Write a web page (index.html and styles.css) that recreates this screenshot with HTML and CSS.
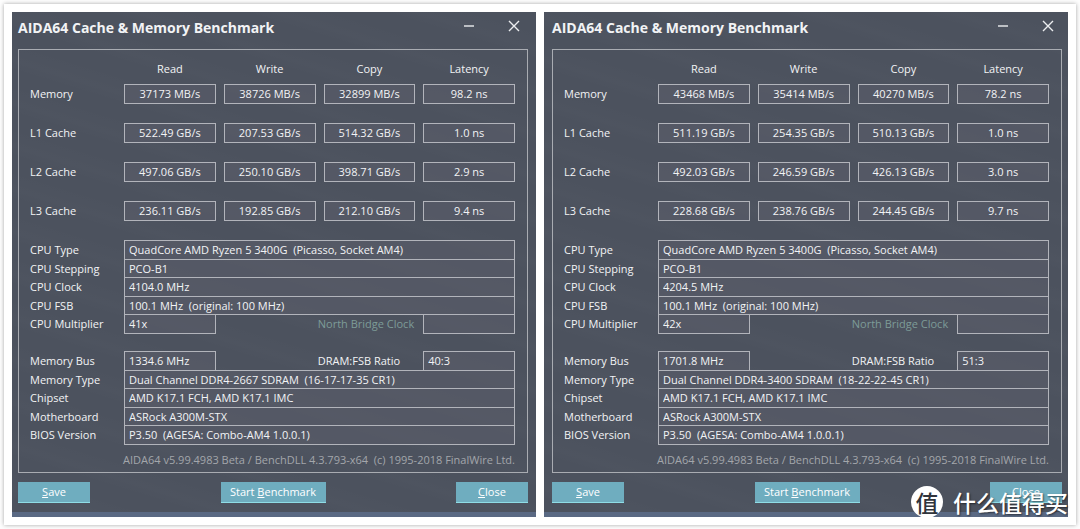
FILE: index.html
```
<!DOCTYPE html>
<html lang="en">
<head>
<meta charset="utf-8">
<title>AIDA64 Cache &amp; Memory Benchmark</title>
<link rel="stylesheet" href="styles.css">
</head>
<body>
<main class="sheet">
  <section class="window">
    <header class="titlebar">
      <h1 class="title">AIDA64 Cache &amp; Memory Benchmark</h1>
      <button class="winbtn" type="button" aria-label="Minimize"><svg width="12" height="12" viewBox="0 0 12 12"><path d="M1 6H11"/></svg></button>
      <button class="winbtn" type="button" aria-label="Close window"><svg width="12" height="12" viewBox="0 0 12 12"><path d="M1 1L11 11M11 1L1 11"/></svg></button>
    </header>
    <div class="panel">
      <table class="bench">
        <thead><tr><td class="name"></td><th>Read</th><th>Write</th><th>Copy</th><th>Latency</th></tr></thead>
        <tbody>
          <tr><th class="name">Memory</th><td><div class="box">37173 MB/s</div></td><td><div class="box">38726 MB/s</div></td><td><div class="box">32899 MB/s</div></td><td><div class="box">98.2 ns</div></td></tr>
          <tr><th class="name">L1 Cache</th><td><div class="box">522.49 GB/s</div></td><td><div class="box">207.53 GB/s</div></td><td><div class="box">514.32 GB/s</div></td><td><div class="box">1.0 ns</div></td></tr>
          <tr><th class="name">L2 Cache</th><td><div class="box">497.06 GB/s</div></td><td><div class="box">250.10 GB/s</div></td><td><div class="box">398.71 GB/s</div></td><td><div class="box">2.9 ns</div></td></tr>
          <tr><th class="name">L3 Cache</th><td><div class="box">236.11 GB/s</div></td><td><div class="box">192.85 GB/s</div></td><td><div class="box">212.10 GB/s</div></td><td><div class="box">9.4 ns</div></td></tr>
        </tbody>
      </table>
      <div class="info">
        <div class="row"><label for="a-type">CPU Type</label><input class="field wide" id="a-type" readonly value="QuadCore AMD Ryzen 5 3400G  (Picasso, Socket AM4)"></div>
        <div class="row"><label for="a-step">CPU Stepping</label><input class="field wide" id="a-step" readonly value="PCO-B1"></div>
        <div class="row"><label for="a-clock">CPU Clock</label><input class="field wide" id="a-clock" readonly value="4104.0 MHz"></div>
        <div class="row"><label for="a-fsb">CPU FSB</label><input class="field wide" id="a-fsb" readonly value="100.1 MHz  (original: 100 MHz)"></div>
        <div class="row"><label for="a-mult">CPU Multiplier</label><input class="field" id="a-mult" readonly value="41x"><label class="second off" for="a-nb">North Bridge Clock</label><input class="field" id="a-nb" readonly value=""></div>
      </div>
      <div class="info">
        <div class="row"><label for="a-bus">Memory Bus</label><input class="field" id="a-bus" readonly value="1334.6 MHz"><label class="second" for="a-ratio">DRAM:FSB Ratio</label><input class="field" id="a-ratio" readonly value="40:3"></div>
        <div class="row"><label for="a-mem">Memory Type</label><input class="field wide" id="a-mem" readonly value="Dual Channel DDR4-2667 SDRAM  (16-17-17-35 CR1)"></div>
        <div class="row"><label for="a-chip">Chipset</label><input class="field wide" id="a-chip" readonly value="AMD K17.1 FCH, AMD K17.1 IMC"></div>
        <div class="row"><label for="a-board">Motherboard</label><input class="field wide" id="a-board" readonly value="ASRock A300M-STX"></div>
        <div class="row"><label for="a-bios">BIOS Version</label><input class="field wide" id="a-bios" readonly value="P3.50  (AGESA: Combo-AM4 1.0.0.1)"></div>
      </div>
      <p class="credit">AIDA64 v5.99.4983 Beta / BenchDLL 4.3.793-x64  (c) 1995-2018 FinalWire Ltd.</p>
    </div>
    <footer class="actions">
      <button class="btn" type="button"><u>S</u>ave</button>
      <button class="btn main" type="button">Start <u>B</u>enchmark</button>
      <button class="btn" type="button"><u>C</u>lose</button>
    </footer>
  </section>

  <section class="window">
    <header class="titlebar">
      <h1 class="title">AIDA64 Cache &amp; Memory Benchmark</h1>
      <button class="winbtn" type="button" aria-label="Minimize"><svg width="12" height="12" viewBox="0 0 12 12"><path d="M1 6H11"/></svg></button>
      <button class="winbtn" type="button" aria-label="Close window"><svg width="12" height="12" viewBox="0 0 12 12"><path d="M1 1L11 11M11 1L1 11"/></svg></button>
    </header>
    <div class="panel">
      <table class="bench">
        <thead><tr><td class="name"></td><th>Read</th><th>Write</th><th>Copy</th><th>Latency</th></tr></thead>
        <tbody>
          <tr><th class="name">Memory</th><td><div class="box">43468 MB/s</div></td><td><div class="box">35414 MB/s</div></td><td><div class="box">40270 MB/s</div></td><td><div class="box">78.2 ns</div></td></tr>
          <tr><th class="name">L1 Cache</th><td><div class="box">511.19 GB/s</div></td><td><div class="box">254.35 GB/s</div></td><td><div class="box">510.13 GB/s</div></td><td><div class="box">1.0 ns</div></td></tr>
          <tr><th class="name">L2 Cache</th><td><div class="box">492.03 GB/s</div></td><td><div class="box">246.59 GB/s</div></td><td><div class="box">426.13 GB/s</div></td><td><div class="box">3.0 ns</div></td></tr>
          <tr><th class="name">L3 Cache</th><td><div class="box">228.68 GB/s</div></td><td><div class="box">238.76 GB/s</div></td><td><div class="box">244.45 GB/s</div></td><td><div class="box">9.7 ns</div></td></tr>
        </tbody>
      </table>
      <div class="info">
        <div class="row"><label for="b-type">CPU Type</label><input class="field wide" id="b-type" readonly value="QuadCore AMD Ryzen 5 3400G  (Picasso, Socket AM4)"></div>
        <div class="row"><label for="b-step">CPU Stepping</label><input class="field wide" id="b-step" readonly value="PCO-B1"></div>
        <div class="row"><label for="b-clock">CPU Clock</label><input class="field wide" id="b-clock" readonly value="4204.5 MHz"></div>
        <div class="row"><label for="b-fsb">CPU FSB</label><input class="field wide" id="b-fsb" readonly value="100.1 MHz  (original: 100 MHz)"></div>
        <div class="row"><label for="b-mult">CPU Multiplier</label><input class="field" id="b-mult" readonly value="42x"><label class="second off" for="b-nb">North Bridge Clock</label><input class="field" id="b-nb" readonly value=""></div>
      </div>
      <div class="info">
        <div class="row"><label for="b-bus">Memory Bus</label><input class="field" id="b-bus" readonly value="1701.8 MHz"><label class="second" for="b-ratio">DRAM:FSB Ratio</label><input class="field" id="b-ratio" readonly value="51:3"></div>
        <div class="row"><label for="b-mem">Memory Type</label><input class="field wide" id="b-mem" readonly value="Dual Channel DDR4-3400 SDRAM  (18-22-22-45 CR1)"></div>
        <div class="row"><label for="b-chip">Chipset</label><input class="field wide" id="b-chip" readonly value="AMD K17.1 FCH, AMD K17.1 IMC"></div>
        <div class="row"><label for="b-board">Motherboard</label><input class="field wide" id="b-board" readonly value="ASRock A300M-STX"></div>
        <div class="row"><label for="b-bios">BIOS Version</label><input class="field wide" id="b-bios" readonly value="P3.50  (AGESA: Combo-AM4 1.0.0.1)"></div>
      </div>
      <p class="credit">AIDA64 v5.99.4983 Beta / BenchDLL 4.3.793-x64  (c) 1995-2018 FinalWire Ltd.</p>
    </div>
    <footer class="actions">
      <button class="btn" type="button"><u>S</u>ave</button>
      <button class="btn main" type="button">Start <u>B</u>enchmark</button>
      <button class="btn" type="button"><u>C</u>lose</button>
    </footer>
  </section>

  <div class="watermark" lang="zh-CN"><span class="seal">值</span><span>什么值得买</span></div>
</main>
</body>
</html>
```

FILE: styles.css
```
* { box-sizing: border-box; }
body {
  margin: 0;
  padding: 4px;
  background: #fdfdfd;
  color: #f2f3f5;
  font: 11px/16px "Open Sans", "Noto Sans", sans-serif;
}
.sheet {
  position: relative;
  display: grid;
  grid-template-columns: 1fr 1fr;
  gap: 8px;
  padding: 8px;
  background: #fff;
  box-shadow: 0 0 4px rgba(0, 0, 0, .35);
}
.window {
  padding: 0 8px 9px 6px;
  border-bottom: 5px solid #5a6983;
  background:
    repeating-linear-gradient(17deg, rgba(255, 255, 255, 0) 0 12px, rgba(255, 255, 255, .012) 22px, rgba(255, 255, 255, 0) 41px),
    #4c525e;
}
.window + .window { padding-left: 8px; padding-right: 6px; }
.titlebar {
  display: flex;
  align-items: flex-start;
  height: 37px;
}
.title {
  flex: 1;
  margin: 0;
  font-size: 14px;
  line-height: 32px;
  white-space: nowrap;
}
.winbtn {
  display: flex;
  justify-content: center;
  align-items: center;
  width: 45px;
  height: 28px;
  padding: 0;
  border: 0;
  background: none;
}
.winbtn:last-child { width: 29px; margin-left: 8px; }
.winbtn path { fill: none; stroke: #eceef0; stroke-width: 1.4; }
.panel {
  padding: 10px 12px 4px 11px;
  border: 1px solid #a9acb2;
}
.bench {
  width: 100%;
  table-layout: fixed;
  border-collapse: collapse;
}
.bench th, .bench td { padding: 0 0 0 8px; font-weight: 400; text-align: center; vertical-align: top; }
.bench .name { width: 86px; padding: 2px 0 0; text-align: left; }
.bench thead tr { height: 24px; }
.bench thead th { padding-top: 1px; }
.bench tbody tr { height: 39px; }
.box {
  height: 20px;
  border: 1px solid #b2b4bb;
  background: rgba(100, 100, 115, .35);
  line-height: 18px;
}
.info { margin-bottom: 18px; }
.row {
  display: grid;
  grid-template-columns: 86px repeat(4, 1fr);
  column-gap: 8px;
  height: 19px;
}
.row:nth-child(even) { height: 18px; }
.row label { line-height: 20px; white-space: nowrap; }
.row .second { grid-column: 3 / 5; padding-left: 94px; }
.row .off { color: #7d9c98; }
.field {
  width: 100%;
  min-width: 0;
  height: 20px;
  padding: 0 4px 1px;
  border: 1px solid #b2b4bb;
  border-radius: 0;
  outline: 0;
  background: rgba(100, 100, 115, .35);
  color: inherit;
  font: inherit;
}
.row:nth-child(even) .field { height: 19px; }
.wide { grid-column: 2 / -1; }
.credit {
  margin: -10px 0 0;
  color: #a3a6ab;
  text-align: right;
  white-space: pre;
}
.actions {
  display: grid;
  grid-template-columns: 72px 105px 72px;
  justify-content: space-between;
  padding-top: 9px;
}
.btn {
  height: 21px;
  padding: 0;
  border: 0;
  border-bottom: 1px solid #8fdde6;
  background: #6fadbf;
  color: #fff;
  font: inherit;
  white-space: nowrap;
}
.watermark {
  position: absolute;
  right: 8px;
  bottom: 7px;
  display: flex;
  align-items: center;
  gap: 10px;
  color: #fff;
  font: 500 23px/32px "Noto Sans CJK SC", sans-serif;
  text-shadow: 1px 1px 2px rgba(0, 0, 0, .55);
}
.seal {
  width: 32px;
  height: 32px;
  border-radius: 50%;
  background: #fff;
  color: #30343c;
  font-size: 23px;
  text-align: center;
  text-shadow: none;
}
```
